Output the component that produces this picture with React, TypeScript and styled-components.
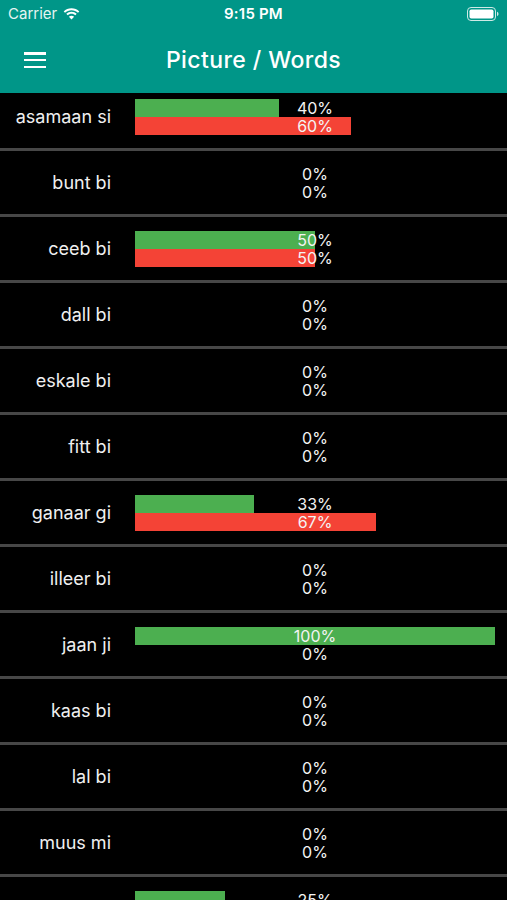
import styled, { createGlobalStyle } from "styled-components";

const GlobalStyle = createGlobalStyle`
  html, body {
    margin: 0;
    padding: 0;
    background: #000;
  }
  body {
    font-family: Inter, "Noto Sans", "Liberation Sans", sans-serif;
  }
`;

const Screen = styled.div`
  width: 507px;
  height: 900px;
  overflow: hidden;
  display: flex;
  flex-direction: column;
  background: #000;
`;

const StatusBar = styled.div`
  height: 27px;
  flex: none;
  background: #009688;
  color: #fff;
  display: grid;
  grid-template-columns: 1fr auto 1fr;
  align-items: center;
  padding: 0 8px;
  font-size: 15px;
`;

const Carrier = styled.div`
  display: flex;
  align-items: center;
  gap: 6px;
  color: #e6f4f2;
`;

const Time = styled.div`
  font-weight: 600;
  letter-spacing: 0.2px;
`;

const Battery = styled.div`
  justify-self: end;
  display: flex;
  align-items: center;
`;

const Header = styled.header`
  height: 66px;
  flex: none;
  background: #009688;
  display: grid;
  grid-template-columns: 1fr auto 1fr;
  align-items: center;
  padding: 0 24px;
`;

const MenuButton = styled.button`
  width: 22px;
  height: 16px;
  padding: 0;
  border: none;
  background: none;
  display: flex;
  flex-direction: column;
  justify-content: space-between;
  cursor: pointer;
`;

const MenuLine = styled.span`
  display: block;
  height: 2.5px;
  background: #fff;
`;

const Title = styled.h1`
  margin: 0;
  text-align: center;
  color: #fff;
  font-size: 23px;
  font-weight: 500;
  letter-spacing: 0.4px;
`;

const ListViewport = styled.div`
  flex: 1;
  overflow: hidden;
`;

const List = styled.div`
  margin-top: -8px;
`;

const Row = styled.div`
  height: 63px;
  border-bottom: 3px solid #474747;
  display: grid;
  grid-template-columns: 111px 360px;
  column-gap: 24px;
  align-items: center;
`;

const Label = styled.div`
  text-align: right;
  color: #f0f0f0;
  font-size: 18px;
  white-space: nowrap;
`;

const Bars = styled.div`
  display: grid;
  grid-template-rows: 18px 18px;
`;

const BarLine = styled.div`
  display: grid;
  height: 18px;
  & > * {
    grid-area: 1 / 1;
  }
`;

const Fill = styled.div<{ $tone: "green" | "red" }>`
  height: 18px;
  background: ${(p) => (p.$tone === "green" ? "#4caf50" : "#f44336")};
`;

const Percent = styled.span`
  text-align: center;
  color: #f4f4f4;
  font-size: 16px;
  line-height: 18px;
`;

const words: [string, number, number][] = [
  ["asamaan si", 40, 60],
  ["bunt bi", 0, 0],
  ["ceeb bi", 50, 50],
  ["dall bi", 0, 0],
  ["eskale bi", 0, 0],
  ["fitt bi", 0, 0],
  ["ganaar gi", 33, 67],
  ["illeer bi", 0, 0],
  ["jaan ji", 100, 0],
  ["kaas bi", 0, 0],
  ["lal bi", 0, 0],
  ["muus mi", 0, 0],
  ["ndaw di", 25, 75],
];

function Bar({ value, tone }: { value: number; tone: "green" | "red" }) {
  return (
    <BarLine>
      <Fill $tone={tone} style={{ width: `${value}%` }} />
      <Percent>{value}%</Percent>
    </BarLine>
  );
}

function WifiIcon() {
  return (
    <svg width="17" height="12" viewBox="0 0 17 12">
      <path d="M8.5 2.2c2.5 0 4.8 1 6.5 2.6l1.3-1.4C14.3 1.5 11.5.3 8.5.3S2.7 1.5.7 3.4L2 4.8c1.7-1.6 4-2.6 6.5-2.6z" fill="#fff" />
      <path d="M8.5 5.7c1.5 0 2.9.6 3.9 1.5l1.3-1.4C12.3 4.5 10.5 3.8 8.5 3.8S4.7 4.5 3.3 5.8l1.3 1.4c1-.9 2.4-1.5 3.9-1.5z" fill="#fff" />
      <path d="M8.5 11.6l2.6-2.8c-.7-.6-1.6-1-2.6-1s-1.9.4-2.6 1z" fill="#fff" />
    </svg>
  );
}

function BatteryIcon() {
  return (
    <svg width="32" height="14" viewBox="0 0 32 14">
      <rect x="0.5" y="0.5" width="28" height="13" rx="3.5" fill="none" stroke="#cfeae6" strokeWidth="1" />
      <rect x="2.5" y="2.5" width="24" height="9" rx="1.8" fill="#fff" />
      <path d="M30 4.8v4.4c.9-.3 1.5-1.2 1.5-2.2s-.6-1.9-1.5-2.2z" fill="#cfeae6" />
    </svg>
  );
}

export default function App() {
  return (
    <Screen>
      <GlobalStyle />
      <StatusBar>
        <Carrier>
          Carrier
          <WifiIcon />
        </Carrier>
        <Time>9:15 PM</Time>
        <Battery>
          <BatteryIcon />
        </Battery>
      </StatusBar>
      <Header>
        <MenuButton aria-label="menu">
          <MenuLine />
          <MenuLine />
          <MenuLine />
        </MenuButton>
        <Title>Picture / Words</Title>
        <span />
      </Header>
      <ListViewport>
        <List>
          {words.map(([word, right, wrong]) => (
            <Row key={word}>
              <Label>{word}</Label>
              <Bars>
                <Bar value={right} tone="green" />
                <Bar value={wrong} tone="red" />
              </Bars>
            </Row>
          ))}
        </List>
      </ListViewport>
    </Screen>
  );
}
